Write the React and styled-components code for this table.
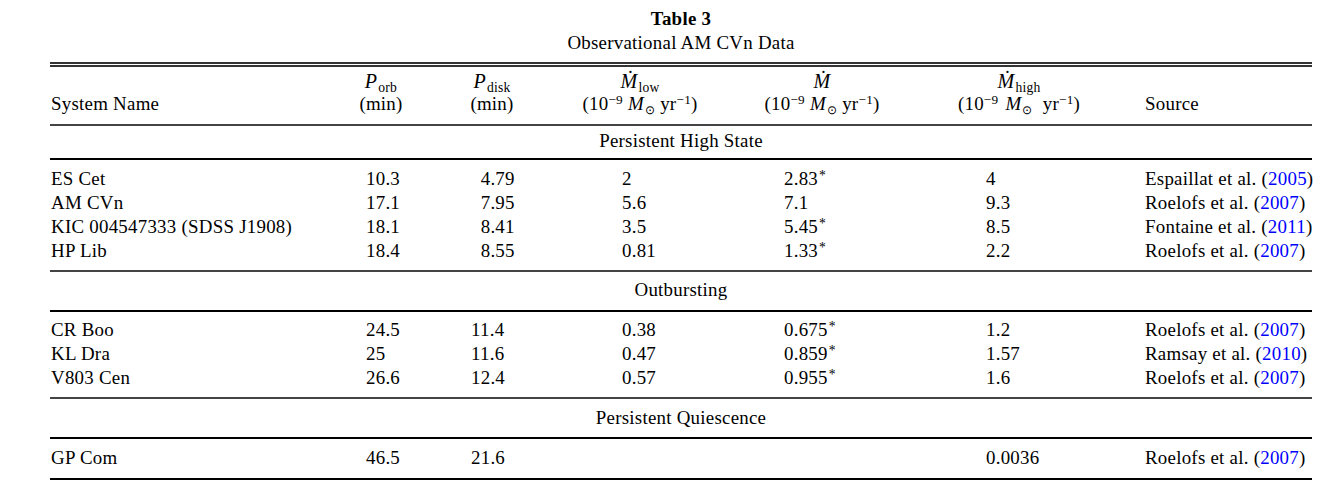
import React from 'react';
import styled, { createGlobalStyle } from 'styled-components';

const GlobalStyle = createGlobalStyle`
  body {
    margin: 0;
    background: #fff;
    color: #000;
    font-family: 'Liberation Serif', 'Times New Roman', serif;
  }
`;

const COLS = '290px 82px 140px 156px 208px 186px 200px';
const PADS = [1, 26, 49, 60, 66, 60, 33];

const Page = styled.div`
  width: 1262px;
  padding: 7px 0 0 50px;
  font-size: 18.9px;
  letter-spacing: 0.25px;
`;

const Caption = styled.div`
  text-align: center;
  line-height: 24px;
  font-weight: ${p => (p.$bold ? 'bold' : 'normal')};
`;

const DoubleRule = styled.div`
  margin-top: 7px;
  height: 1px;
  border-top: 2px solid #333;
  border-bottom: 2px solid #333;
`;

const Rule = styled.div`
  height: 2px;
  background: ${p => (p.$dark ? '#000' : '#444')};
`;

const HeadRow = styled.div`
  display: grid;
  grid-template-columns: ${COLS};
  align-items: end;
  padding: 4px 0 9px;
  line-height: 22px;
`;

const HeadCell = styled.div`
  display: flex;
  flex-direction: column;
  text-align: ${p => (p.$left ? 'left' : 'center')};
  padding-left: ${p => p.$pad || 0}px;
  white-space: nowrap;
`;

const HeadLine = styled.span`
  display: block;
  height: 22px;
`;

const SectionTitle = styled.div`
  text-align: center;
  line-height: 24px;
  padding: ${p => p.$top}px 0 ${p => p.$bottom}px;
`;

const Body = styled.div`
  padding: ${p => p.$top}px 0 ${p => p.$bottom}px;
`;

const Row = styled.div`
  display: grid;
  grid-template-columns: ${COLS};
  line-height: 24px;
  height: 24px;
`;

const Cell = styled.div`
  padding-left: ${p => p.$pad}px;
  white-space: nowrap;
`;

const Phantom = styled.span`
  visibility: hidden;
`;

const Sub = styled.span`
  font-size: 0.72em;
  position: relative;
  top: 0.28em;
  line-height: 0;
  margin-left: 1px;
`;

const Sup = styled.span`
  font-size: 0.7em;
  position: relative;
  top: -0.42em;
  line-height: 0;
`;

const Star = styled.span`
  font-size: 0.72em;
  position: relative;
  top: -0.38em;
  line-height: 0;
  margin-left: 1px;
`;

const Italic = styled.i`
  font-style: italic;
  font-size: ${p => (p.$big ? '1.06em' : '1em')};
  line-height: 0;
`;

const Odot = styled.span`
  font-size: 0.62em;
  position: relative;
  top: 0.35em;
  line-height: 0;
  margin-left: 1px;
`;

const Gap = styled.span`
  display: inline-block;
  width: ${p => p.$w}px;
`;

const Cite = styled.span`
  color: #0000ff;
`;

const Mdot = () => <Italic $big>Ṁ</Italic>;

const Units = ({ wide }) => (
  <HeadLine>
    (10<Sup>−9</Sup>
    {wide ? <Gap $w={7} /> : ' '}
    <Italic>M</Italic>
    <Odot>⊙</Odot>
    {wide ? <Gap $w={10} /> : ' '}
    yr<Sup>−1</Sup>)
  </HeadLine>
);

const sections = [
  {
    title: 'Persistent High State',
    head: [3, 5],
    body: [7, 7],
    rows: [
      ['ES Cet', '10.3', '4.79', '2', '2.83', '4', 'Espaillat et al.', '2005'],
      ['AM CVn', '17.1', '7.95', '5.6', '7.1', '9.3', 'Roelofs et al.', '2007'],
      ['KIC 004547333 (SDSS J1908)', '18.1', '8.41', '3.5', '5.45', '8.5', 'Fontaine et al.', '2011'],
      ['HP Lib', '18.4', '8.55', '0.81', '1.33', '2.2', 'Roelofs et al.', '2007'],
    ],
    stars: [true, false, true, true],
  },
  {
    title: 'Outbursting',
    head: [6, 8],
    body: [6, 7],
    rows: [
      ['CR Boo', '24.5', '11.4', '0.38', '0.675', '1.2', 'Roelofs et al.', '2007'],
      ['KL Dra', '25', '11.6', '0.47', '0.859', '1.57', 'Ramsay et al.', '2010'],
      ['V803 Cen', '26.6', '12.4', '0.57', '0.955', '1.6', 'Roelofs et al.', '2007'],
    ],
    stars: [true, true, true],
  },
  {
    title: 'Persistent Quiescence',
    head: [7, 7],
    body: [7, 8],
    rows: [['GP Com', '46.5', '21.6', '', '', '0.0036', 'Roelofs et al.', '2007']],
    stars: [false],
  },
];

const DataRow = ({ row, star }) => {
  const [name, porb, pdisk, mlow, m, mhigh, who, year] = row;
  return (
    <Row>
      <Cell $pad={PADS[0]}>{name}</Cell>
      <Cell $pad={PADS[1]}>{porb}</Cell>
      <Cell $pad={PADS[2]}>
        {parseFloat(pdisk) < 10 && <Phantom>0</Phantom>}
        {pdisk}
      </Cell>
      <Cell $pad={PADS[3]}>{mlow}</Cell>
      <Cell $pad={PADS[4]}>
        {m}
        {star && <Star>*</Star>}
      </Cell>
      <Cell $pad={PADS[5]}>{mhigh}</Cell>
      <Cell $pad={PADS[6]}>
        {who} (<Cite>{year}</Cite>)
      </Cell>
    </Row>
  );
};

export default function App() {
  return (
    <>
      <GlobalStyle />
      <Page>
        <Caption $bold>Table 3</Caption>
        <Caption>Observational AM CVn Data</Caption>
        <DoubleRule />
        <HeadRow>
          <HeadCell $left $pad={PADS[0]}>
            <HeadLine>System Name</HeadLine>
          </HeadCell>
          <HeadCell>
            <HeadLine>
              <Italic $big>P</Italic>
              <Sub>orb</Sub>
            </HeadLine>
            <HeadLine>(min)</HeadLine>
          </HeadCell>
          <HeadCell>
            <HeadLine>
              <Italic $big>P</Italic>
              <Sub>disk</Sub>
            </HeadLine>
            <HeadLine>(min)</HeadLine>
          </HeadCell>
          <HeadCell>
            <HeadLine>
              <Mdot />
              <Sub>low</Sub>
            </HeadLine>
            <Units />
          </HeadCell>
          <HeadCell>
            <HeadLine>
              <Mdot />
            </HeadLine>
            <Units />
          </HeadCell>
          <HeadCell>
            <HeadLine>
              <Mdot />
              <Sub>high</Sub>
            </HeadLine>
            <Units wide />
          </HeadCell>
          <HeadCell $left $pad={PADS[6]}>
            <HeadLine>Source</HeadLine>
          </HeadCell>
        </HeadRow>
        <Rule />
        {sections.map((s, i) => (
          <React.Fragment key={s.title}>
            <SectionTitle $top={s.head[0]} $bottom={s.head[1]}>
              {s.title}
            </SectionTitle>
            <Rule $dark />
            <Body $top={s.body[0]} $bottom={s.body[1]}>
              {s.rows.map((r, j) => (
                <DataRow key={r[0]} row={r} star={s.stars[j]} />
              ))}
            </Body>
            <Rule $dark={i === sections.length - 1} />
          </React.Fragment>
        ))}
      </Page>
    </>
  );
}
